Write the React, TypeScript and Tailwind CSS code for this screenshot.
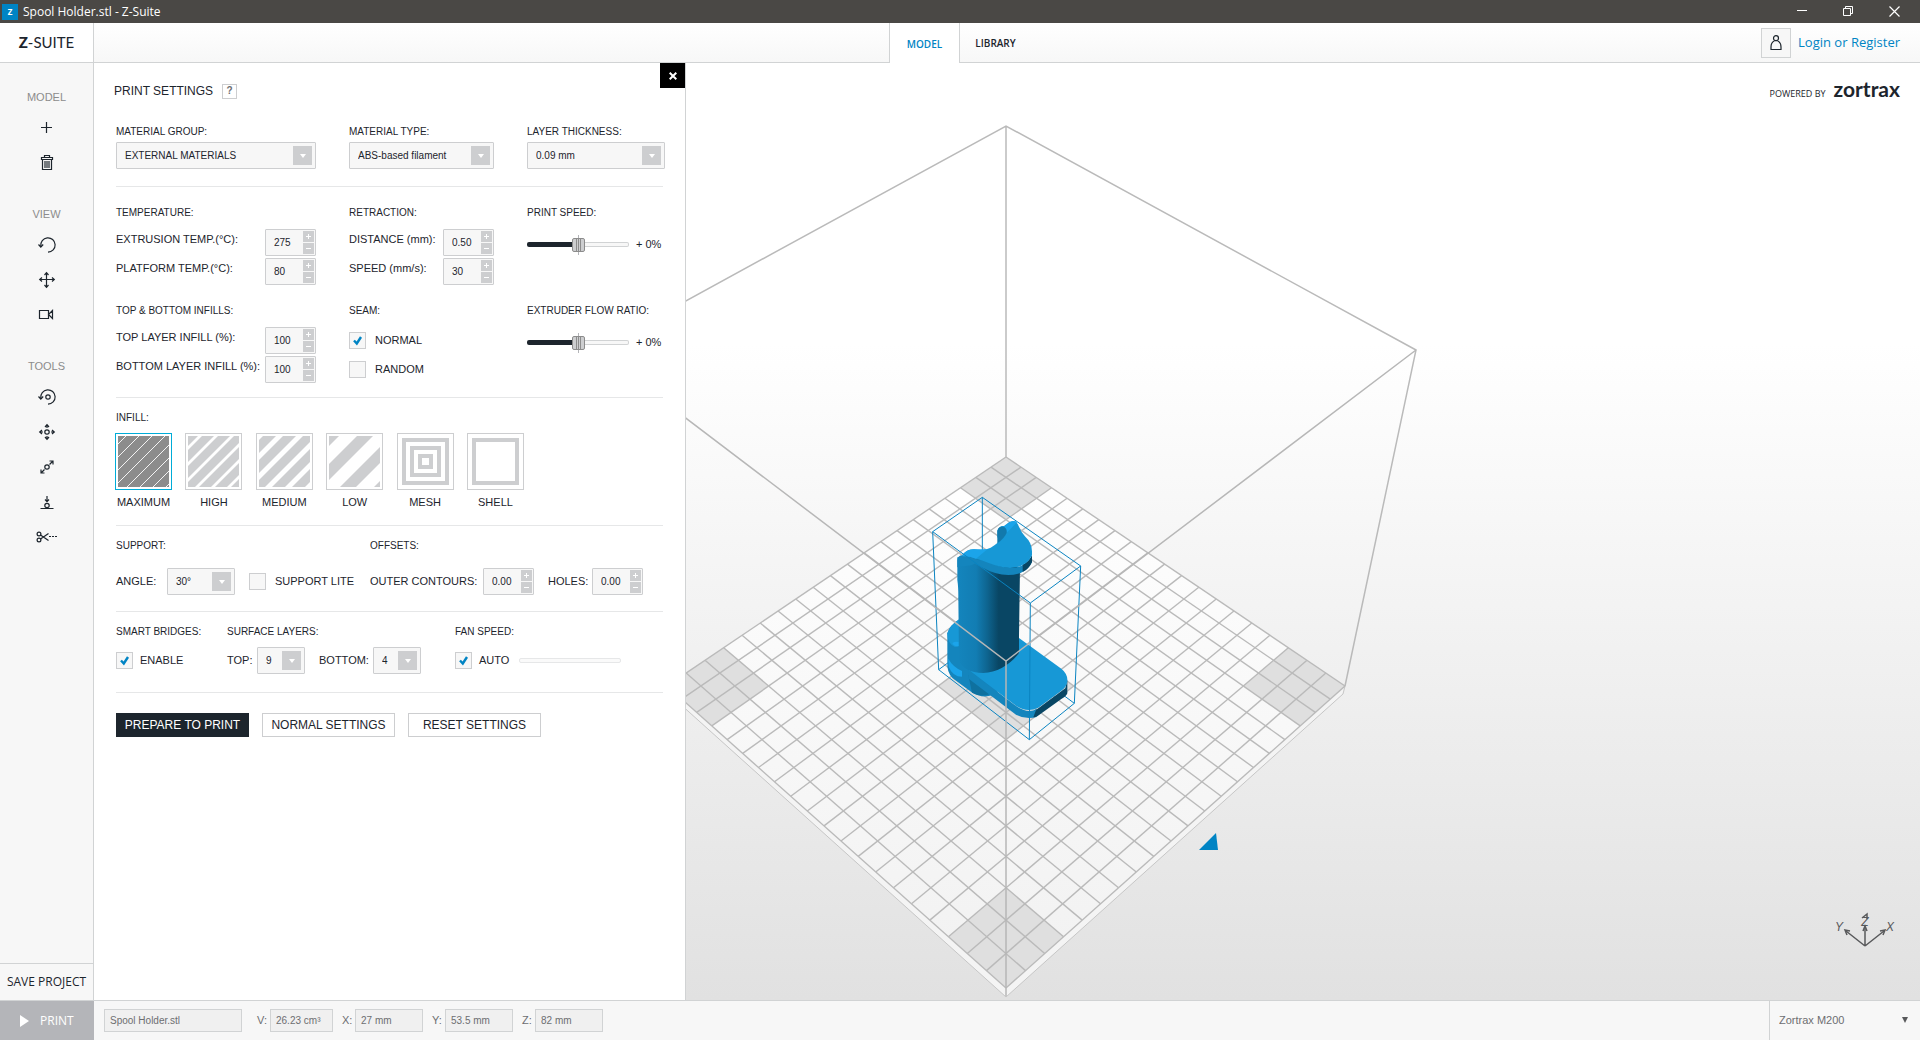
import { useState, type ReactNode } from 'react'

type Point = [number, number]

const CELLS = 20
const TOP: Point = [1006, 457]
const RIGHT: Point = [1345, 686]
const BOTTOM: Point = [1006, 988]
const LEFT: Point = [667, 686]

// Perspective mapping of the unit square onto the build platform
function project(u: number, v: number): Point {
  const [x0, y0] = TOP
  const [x1, y1] = RIGHT
  const [x2, y2] = BOTTOM
  const [x3, y3] = LEFT
  const dx1 = x1 - x2
  const dx2 = x3 - x2
  const dx3 = x0 - x1 + x2 - x3
  const dy1 = y1 - y2
  const dy2 = y3 - y2
  const dy3 = y0 - y1 + y2 - y3
  const det = dx1 * dy2 - dx2 * dy1
  const g = (dx3 * dy2 - dx2 * dy3) / det
  const h = (dx1 * dy3 - dx3 * dy1) / det
  const w = g * u + h * v + 1
  return [
    ((x1 - x0 + g * x1) * u + (x3 - x0 + h * x3) * v + x0) / w,
    ((y1 - y0 + g * y1) * u + (y3 - y0 + h * y3) * v + y0) / w,
  ]
}

function area(a: number, b: number, c: number, d: number) {
  const corners = [project(a, b), project(c, b), project(c, d), project(a, d)]
  return corners.map((p) => p.join(',')).join(' ')
}

const STEPS = Array.from({ length: CELLS + 1 }, (_, i) => i / CELLS)
const MARKED = [
  area(0, 0, 0.15, 0.15),
  area(0.85, 0, 1, 0.15),
  area(0, 0.85, 0.15, 1),
  area(0.85, 0.85, 1, 1),
  area(0.4, 0.4, 0.6, 0.6),
]

function Platform() {
  return (
    <g>
      <path d="M667 686L1006 988L1345 686L1343 694L1006 997L669 694Z" fill="#f4f4f4" />
      <path d="M669 694L1006 997L1343 694L1345 686" fill="none" stroke="#c6c6c6" />
      <polygon points={area(0, 0, 1, 1)} fill="url(#plate)" />
      {MARKED.map((points) => (
        <polygon key={points} points={points} fill="#dfdfdf" />
      ))}
      <g stroke="#bababa" strokeWidth="1.4">
        {STEPS.map((t) => {
          const [ax, ay] = project(t, 0)
          const [bx, by] = project(t, 1)
          const [cx, cy] = project(0, t)
          const [dx, dy] = project(1, t)
          return (
            <g key={t}>
              <line x1={ax} y1={ay} x2={bx} y2={by} />
              <line x1={cx} y1={cy} x2={dx} y2={dy} />
            </g>
          )
        })}
      </g>
    </g>
  )
}

function SpoolHolder() {
  return (
    <g transform="translate(900 480) scale(0.33333)">
      <g fill="none" stroke="#0a84c1" strokeWidth="3">
        <path d="M98 155L247 52L542 258L523 670L388 779L116 569ZM247 52V240M116 569L150 544M523 670L480 638" />
      </g>

      {/* rear foot */}
      <path d="M180 416Q148 436 142 460V560Q146 588 166 601L214 636Q244 656 276 646L330 610L250 480Z" fill="#1485bd" />
      <path d="M180 416Q148 436 142 460Q142 492 165 501L180 498Z" fill="#1798d6" />
      <path d="M157 489Q164 484 176 486V498Q164 502 157 489Z" fill="#1ba4ea" />
      <path d="M145 536Q158 560 186 573V590Q158 590 146 560Z" fill="#1ba4ea" />
      <path d="M205 585L275 640Q245 654 216 638Z" fill="#0f719f" />

      {/* front foot */}
      <path d="M204 568L345 676Q385 704 410 686V711Q378 720 348 704L206 596Z" fill="#1485bd" />
      <path d="M408 690L496 625L502 600V640Q500 648 484 657L412 709Q406 712 400 712Z" fill="#094664" />
      <path d="M357 474L484 566Q504 582 502 604Q500 622 482 634L415 683Q382 699 350 679L204 568Q280 590 357 520Z" fill="#1798d6" />

      {/* barrel */}
      <path d="M172 232V300Q175 320 175 350L177 540Q190 578 250 579Q310 577 357 520V470L360 262L250 225Z" fill="url(#barrel)" />

      {/* head */}
      <path d="M250 238Q300 264 330 264Q380 262 396 228V246Q380 284 325 285Q285 284 250 264L215 246Z" fill="#1485bd" />
      <path d="M368 254Q386 246 396 226V246Q388 266 368 276Z" fill="#094664" />
      <path d="M187 224Q203 206 224 208Q250 214 272 203Q296 190 300 178L292 172V152Q296 138 312 138L328 126Q350 118 357 140Q364 158 376 170Q396 188 396 214V226Q380 262 330 264Q300 262 264 248Q230 234 187 229Z" fill="#1798d6" />
      <path d="M172 240Q174 226 187 226Q216 230 240 242L215 256L172 262Z" fill="#1485bd" />
      <path d="M187 226Q203 206 224 208L262 208L228 236Q208 228 187 229Z" fill="#1ba4ea" />
      <path d="M296 146Q302 136 314 139L330 126Q342 120 352 126L320 158Z" fill="#1ba4ea" />
      <path d="M292 152Q296 138 312 140Q322 146 320 158Q314 174 292 190Z" fill="#1279ac" />

      <g fill="none" stroke="#0a84c1" strokeWidth="3">
        <path d="M98 155L391 369L542 258M391 369L388 779" />
      </g>
    </g>
  )
}

function Scene() {
  return (
    <svg
      viewBox="686 63 1234 937"
      preserveAspectRatio="xMinYMid slice"
      className="absolute inset-0 h-full w-full"
      role="img"
      aria-label="Build volume"
    >
      <defs>
        <linearGradient id="plate" gradientUnits="userSpaceOnUse" x1="0" y1="457" x2="0" y2="988">
          <stop offset="0" stopColor="#ffffff" />
          <stop offset="1" stopColor="#f1f1f1" />
        </linearGradient>
        <linearGradient id="barrel" x1="0" y1="0" x2="1" y2="0">
          <stop offset="0" stopColor="#1485bd" />
          <stop offset="0.3" stopColor="#127db3" />
          <stop offset="0.48" stopColor="#0e648f" />
          <stop offset="0.66" stopColor="#094664" />
          <stop offset="1" stopColor="#094664" />
        </linearGradient>
      </defs>

      <g fill="none" stroke="#bababa" strokeWidth="1.5">
        <path d="M596 350L1006 126L1416 350L1345 686M1006 126V457" />
        <path d="M596 350L667 686" />
      </g>
      <Platform />
      <SpoolHolder />
      <path d="M596 350L1006 661L1416 350M1006 661V996" fill="none" stroke="#b7b7b7" strokeWidth="1.5" />

      <path d="M1199 850L1216 833L1218 850Z" fill="#0084c4" />

      {/* axes */}
      <g fill="none" stroke="#58595b" strokeWidth="1.5">
        <path d="M1865 946L1846 931M1865 946L1884 931M1865 946V927" />
        <path d="M1850 931L1845 930L1847 935M1880 931L1885 930L1883 935M1863 931L1865 926L1867 931" />
        <path d="M1862 918L1867 914L1867 919" />
      </g>
      <g fill="#58595b" fontFamily="Liberation Sans" fontSize="12" fontStyle="italic" textAnchor="middle">
        <text x="1839" y="931">Y</text>
        <text x="1865" y="926">Z</text>
        <text x="1890" y="931">X</text>
      </g>
    </svg>
  )
}

function Icon({ children }: { children: ReactNode }) {
  return (
    <svg width="24" height="24" viewBox="0 0 24 24" fill="none" stroke="#1d252d" strokeWidth="1.2" aria-hidden="true">
      {children}
    </svg>
  )
}

const ICONS: Record<string, ReactNode> = {
  Add: <path d="M11.500 6v11M6 11.500h11" />,
  Delete: (
    <path d="M7.500 8.500v10h9v-10M6.500 8.500v-2h11v2zM9.500 6.500v-2h5v2M10 10v7M12 10v7M14 10v7" />
  ),
  'Reset view': (
    <>
      <path d="M5.800 13A7.200 7.200 0 1 1 13 19.200" />
      <path d="M3.500 11.500L5.800 14L8.200 11.500" />
    </>
  ),
  'Move view': (
    <path d="M11.500 5v14M5 11.500h14M9.500 7l2-2.300L13.500 7M9.500 17l2 2.300L13.500 17M7 9.500l-2.300 2L7 13.500M17 9.500l2.300 2L17 13.500" />
  ),
  Camera: <path d="M4.500 7.500h9v8h-9zM13.500 11.500l4-4v8z" />,
  Rotate: (
    <>
      <path d="M5.800 13A7.200 7.200 0 1 1 13 19.200" />
      <path d="M3.500 11.500L5.800 14L8.200 11.500" />
      <circle cx="13" cy="12" r="2.200" />
    </>
  ),
  Move: (
    <>
      <circle cx="12" cy="12" r="2.200" />
      <path d="M12 8V5M12 16v3M8 12H5M16 12h3M10 7l2-2.300L14 7M10 17l2 2.300L14 17M7 10l-2.300 2L7 14M17 10l2.300 2L17 14" />
    </>
  ),
  Scale: (
    <>
      <circle cx="12" cy="12" r="2.200" />
      <path d="M14.500 9.500L18 6M9.500 14.500L6 18M14.500 6H18v3.500M6 14.500V18h3.500" />
    </>
  ),
  Place: (
    <>
      <circle cx="12" cy="15.500" r="2.200" />
      <path d="M5.500 18.500h13M12 6v5.500M10 9.500l2 2.200L14 9.500" />
    </>
  ),
  Split: (
    <>
      <circle cx="4" cy="9" r="1.900" />
      <circle cx="4" cy="15" r="1.900" />
      <path d="M5.500 14L13.500 8.500M5.500 10L13.500 15.500" />
      <path d="M14 11.500h8.500" strokeDasharray="2 1" />
    </>
  ),
}

const TOOL_GROUPS = [
  { title: 'MODEL', tools: ['Add', 'Delete'] },
  { title: 'VIEW', tools: ['Reset view', 'Move view', 'Camera'] },
  { title: 'TOOLS', tools: ['Rotate', 'Move', 'Scale', 'Place', 'Split'] },
]

function Sidebar() {
  return (
    <aside className="flex w-[94px] shrink-0 flex-col border-r border-[#d1d3d4] bg-[#f7f7f7]">
      <div className="flex flex-1 flex-col gap-[31px] pt-[26px]">
        {TOOL_GROUPS.map((group) => (
          <div key={group.title} className="flex flex-col items-center">
            <h2 className="mb-[11px] text-[11px] leading-4 text-[#8c8c8c]">{group.title}</h2>
            <div className="flex flex-col gap-[11px]">
              {group.tools.map((tool) => (
                <button key={tool} type="button" aria-label={tool}>
                  <Icon>{ICONS[tool]}</Icon>
                </button>
              ))}
            </div>
          </div>
        ))}
      </div>
      <button
        type="button"
        className="h-[37px] border-t border-[#d1d3d4] font-['Open_Sans'] text-[12px] font-medium whitespace-nowrap text-[#1d252d]"
      >
        SAVE PROJECT
      </button>
    </aside>
  )
}

function Heading({ children }: { children: ReactNode }) {
  return <h3 className="text-[10px] leading-4 text-[#1d252d]">{children}</h3>
}

function Select({ label, value, width }: { label: string; value: string; width: string }) {
  return (
    <span className={`relative block h-[27px] ${width}`}>
      <select
        aria-label={label}
        defaultValue={value}
        className="h-full w-full appearance-none rounded-[1px] border border-[#cdced0] bg-[#f7f7f7] px-2 text-[10px] text-[#1d252d]"
      >
        <option>{value}</option>
      </select>
      <span className="pointer-events-none absolute top-1 right-1 flex h-[19px] w-[19px] items-center justify-center bg-[#cdced0]">
        <svg width="6" height="4" viewBox="0 0 6 4" fill="#fff" aria-hidden="true">
          <path d="M0 0h6L3 4z" />
        </svg>
      </span>
    </span>
  )
}

function Spinner({ label, initial, step = 1 }: { label: string; initial: string; step?: number }) {
  const [value, setValue] = useState(initial)
  const digits = initial.includes('.') ? 2 : 0

  function change(delta: number) {
    setValue((prev) => (Number(prev) + delta).toFixed(digits))
  }

  return (
    <span className="flex h-[27px] w-[51px] shrink-0 rounded-[1px] border border-[#cdced0] bg-[#f7f7f7] p-px">
      <input
        aria-label={label}
        value={value}
        onChange={(e) => setValue(e.target.value)}
        className="w-full min-w-0 bg-transparent pl-[7px] text-[10px] text-[#1d252d] outline-none"
      />
      <span className="flex w-[11px] shrink-0 flex-col gap-px">
        <button type="button" aria-label="Increase" onClick={() => change(step)} className="flex flex-1 items-center justify-center bg-[#cdced0]">
          <svg width="5" height="5" viewBox="0 0 5 5" stroke="#fff" aria-hidden="true">
            <path d="M2.500 0v5M0 2.500h5" />
          </svg>
        </button>
        <button type="button" aria-label="Decrease" onClick={() => change(-step)} className="flex flex-1 items-center justify-center bg-[#cdced0]">
          <svg width="5" height="5" viewBox="0 0 5 5" stroke="#fff" aria-hidden="true">
            <path d="M0 2.500h5" />
          </svg>
        </button>
      </span>
    </span>
  )
}

function Field({ label, initial, step }: { label: string; initial: string; step?: number }) {
  return (
    <div className="flex items-start justify-between">
      <span className="text-[11px] leading-5 whitespace-nowrap">{label}</span>
      <Spinner label={label} initial={initial} step={step} />
    </div>
  )
}

function Checkbox({ label, checked = false, gap = 'gap-[9px]' }: { label: string; checked?: boolean; gap?: string }) {
  return (
    <label className={`flex h-[27px] items-center text-[11px] whitespace-nowrap ${gap}`}>
      <span className="relative h-[17px] w-[17px]">
        <input
          type="checkbox"
          defaultChecked={checked}
          className="peer block h-[17px] w-[17px] appearance-none border border-[#cdced0] bg-[#f7f7f7]"
        />
        <svg
          viewBox="0 0 17 17"
          className="pointer-events-none absolute inset-0 hidden peer-checked:block"
          fill="none"
          stroke="#0084c4"
          strokeWidth="2.400"
          aria-hidden="true"
        >
          <path d="M5 8.500L7.800 11.500L12 5" />
        </svg>
      </span>
      {label}
    </label>
  )
}

function Slider({ label }: { label: string }) {
  const [value, setValue] = useState(0)
  return (
    <div className="flex h-[31px] items-center gap-[7px]">
      <span className="relative flex h-5 w-[102px] items-center">
        <span className="absolute inset-y-0 left-1/2 w-px bg-[#b4b5b9]" />
        <input
          type="range"
          min={-50}
          max={50}
          value={value}
          aria-label={label}
          onChange={(e) => setValue(Number(e.target.value))}
          className="relative h-[5px] w-full appearance-none rounded-[2px] border border-transparent [background:linear-gradient(#1d252d,#1d252d)_0_0/50%_100%_no-repeat_border-box,linear-gradient(#f7f7f7,#f7f7f7)_padding-box,#d1d3d4_border-box] [&::-webkit-slider-thumb]:h-[14px] [&::-webkit-slider-thumb]:w-[13px] [&::-webkit-slider-thumb]:appearance-none [&::-webkit-slider-thumb]:rounded-[2px] [&::-webkit-slider-thumb]:border [&::-webkit-slider-thumb]:border-[#8c8c8c] [&::-webkit-slider-thumb]:bg-[linear-gradient(to_right,#cdced0_3px,#8c8c8c_3px,#8c8c8c_4px,#cdced0_4px,#cdced0_5px,#8c8c8c_5px,#8c8c8c_6px,#cdced0_6px,#cdced0_7px,#8c8c8c_7px,#8c8c8c_8px,#cdced0_8px)]"
        />
      </span>
      <span className="text-[11px] whitespace-nowrap">+ {value}%</span>
    </div>
  )
}

function Stripes({ start, pitch, width }: { start: number; pitch: number; width: number }) {
  const bands = Array.from({ length: 12 }, (_, i) => start + pitch * i).filter((c) => c < 102)
  return (
    <>
      {bands.map((c) => (
        <polygon key={c} points={`${c},0 ${c + width},0 ${c + width - 51},51 ${c - 51},51`} fill="#cdced0" />
      ))}
    </>
  )
}

const INFILLS: { name: string; art: ReactNode }[] = [
  {
    name: 'MAXIMUM',
    art: (
      <>
        <rect width="51" height="51" fill="#8c8c8c" />
        <path d="M8 0L-43 51M21 0L-30 51M34 0L-17 51M47 0L-4 51M60 0L9 51M73 0L22 51M86 0L35 51M99 0L48 51" stroke="#fff" strokeWidth="0.900" />
      </>
    ),
  },
  { name: 'HIGH', art: <Stripes start={-2} pitch={16} width={12} /> },
  { name: 'MEDIUM', art: <Stripes start={4} pitch={20} width={13} /> },
  { name: 'LOW', art: <Stripes start={-6} pitch={34} width={16} /> },
  {
    name: 'MESH',
    art: (
      <g fill="none" stroke="#cdced0" strokeWidth="4">
        <rect x="4" y="4" width="43" height="43" />
        <rect x="12" y="12" width="27" height="27" />
        <rect x="20" y="20" width="11" height="11" />
      </g>
    ),
  },
  { name: 'SHELL', art: <rect x="4" y="4" width="43" height="43" fill="none" stroke="#cdced0" strokeWidth="4" /> },
]

function Infill() {
  const [selected, setSelected] = useState('MAXIMUM')
  return (
    <div className="-ml-px mt-[7px] flex w-[409px] justify-between">
      {INFILLS.map(({ name, art }) => (
        <label key={name} className="flex w-[57px] flex-col items-center gap-1 text-[11px] leading-4">
          <input
            type="radio"
            name="infill"
            checked={selected === name}
            onChange={() => setSelected(name)}
            className="peer sr-only"
          />
          <span className="block h-[57px] w-[57px] border border-[#cdced0] bg-white p-[2px] peer-checked:border-[#00acd8]">
            <svg width="51" height="51" viewBox="0 0 51 51" aria-hidden="true">
              {art}
            </svg>
          </span>
          {name}
        </label>
      ))}
    </div>
  )
}

function PrintSettings() {
  return (
    <section className="relative w-[592px] shrink-0 border-r border-[#d1d3d4] bg-white pr-[22px] pl-[22px] text-[#1d252d]">
      <button type="button" aria-label="Close" className="absolute top-0 right-0 flex h-[25px] w-[25px] items-center justify-center bg-black">
        <svg width="8" height="8" viewBox="0 0 8 8" stroke="#fff" strokeWidth="2" aria-hidden="true">
          <path d="M0.700 0.700L7.300 7.300M7.300 0.700L0.700 7.300" />
        </svg>
      </button>

      <header className="-ml-[2px] flex items-center gap-[9px] pt-5">
        <h2 className="text-[12px] leading-4">PRINT SETTINGS</h2>
        <button type="button" aria-label="Help" className="h-[15px] w-[15px] border border-[#cdced0] text-[10px] leading-3 font-bold text-[#6d6e71]">
          ?
        </button>
      </header>

      <div className="grid grid-cols-[233px_178px_1fr] border-b border-[#e6e7e8] pt-[25px] pb-[17px]">
        <div className="flex flex-col gap-[2px]">
          <Heading>MATERIAL GROUP:</Heading>
          <Select label="Material group" value="EXTERNAL MATERIALS" width="w-[200px]" />
        </div>
        <div className="flex flex-col gap-[2px]">
          <Heading>MATERIAL TYPE:</Heading>
          <Select label="Material type" value="ABS-based filament" width="w-[145px]" />
        </div>
        <div className="flex flex-col gap-[2px]">
          <Heading>LAYER THICKNESS:</Heading>
          <Select label="Layer thickness" value="0.09 mm" width="w-[138px]" />
        </div>
      </div>

      <div className="grid grid-cols-[233px_178px_1fr] gap-y-[18px] border-b border-[#e6e7e8] pt-[18px] pb-[14px]">
        <div>
          <Heading>TEMPERATURE:</Heading>
          <div className="mt-2 flex w-[200px] flex-col gap-[2px]">
            <Field label="EXTRUSION TEMP.(°C):" initial="275" />
            <Field label="PLATFORM TEMP.(°C):" initial="80" />
          </div>
        </div>
        <div>
          <Heading>RETRACTION:</Heading>
          <div className="mt-2 flex w-[145px] flex-col gap-[2px]">
            <Field label="DISTANCE (mm):" initial="0.50" step={0.05} />
            <Field label="SPEED (mm/s):" initial="30" />
          </div>
        </div>
        <div>
          <Heading>PRINT SPEED:</Heading>
          <div className="mt-2">
            <Slider label="Print speed" />
          </div>
        </div>
        <div>
          <Heading>TOP &amp; BOTTOM INFILLS:</Heading>
          <div className="mt-2 flex w-[200px] flex-col gap-[2px]">
            <Field label="TOP LAYER INFILL (%):" initial="100" />
            <Field label="BOTTOM LAYER INFILL (%):" initial="100" />
          </div>
        </div>
        <div>
          <Heading>SEAM:</Heading>
          <div className="mt-2 flex flex-col gap-[2px]">
            <Checkbox label="NORMAL" checked />
            <Checkbox label="RANDOM" />
          </div>
        </div>
        <div>
          <Heading>EXTRUDER FLOW RATIO:</Heading>
          <div className="mt-2">
            <Slider label="Extruder flow ratio" />
          </div>
        </div>
      </div>

      <div className="border-b border-[#e6e7e8] pt-3 pb-[15px]">
        <Heading>INFILL:</Heading>
        <Infill />
      </div>

      <div className="grid grid-cols-[254px_1fr] gap-y-[14px] border-b border-[#e6e7e8] pt-3 pb-4 text-[11px]">
        <Heading>SUPPORT:</Heading>
        <Heading>OFFSETS:</Heading>
        <div className="flex items-center">
          <span className="w-[51px]">ANGLE:</span>
          <Select label="Angle" value="30°" width="w-[68px] mr-[14px]" />
          <Checkbox label="SUPPORT LITE" />
        </div>
        <div className="flex items-center">
          <span className="w-[113px] whitespace-nowrap">OUTER CONTOURS:</span>
          <Spinner label="Outer contours" initial="0.00" step={0.01} />
          <span className="ml-[14px] w-11">HOLES:</span>
          <Spinner label="Holes" initial="0.00" step={0.01} />
        </div>
      </div>

      <div className="grid grid-cols-[111px_228px_1fr] gap-y-[7px] border-b border-[#e6e7e8] pt-3 pb-[18px] text-[11px]">
        <Heading>SMART BRIDGES:</Heading>
        <Heading>SURFACE LAYERS:</Heading>
        <Heading>FAN SPEED:</Heading>
        <Checkbox label="ENABLE" checked gap="gap-[7px]" />
        <div className="flex items-center">
          <span className="w-[30px]">TOP:</span>
          <Select label="Top layers" value="9" width="w-[48px]" />
          <span className="ml-[14px] w-[54px]">BOTTOM:</span>
          <Select label="Bottom layers" value="4" width="w-[48px]" />
        </div>
        <div className="flex items-center gap-[10px]">
          <Checkbox label="AUTO" checked gap="gap-[7px]" />
          <input
            type="range"
            disabled
            aria-label="Fan speed"
            className="h-[5px] w-[102px] appearance-none rounded-[2px] border border-[#e6e7e8] bg-[#fafafa] [&::-webkit-slider-thumb]:invisible [&::-webkit-slider-thumb]:appearance-none"
          />
        </div>
      </div>

      <div className="flex gap-[13px] pt-5 text-[12px]">
        <button type="button" className="h-6 w-[133px] bg-[#1d252d] text-white">
          PREPARE TO PRINT
        </button>
        <button type="button" className="h-6 w-[133px] border border-[#cdced0]">
          NORMAL SETTINGS
        </button>
        <button type="button" className="h-6 w-[133px] border border-[#cdced0]">
          RESET SETTINGS
        </button>
      </div>
    </section>
  )
}

function TitleBar() {
  return (
    <div className="flex h-[23px] shrink-0 items-center bg-[#4a4845] pr-5 pl-[2px] font-['Open_Sans'] text-[12px] text-white">
      <span className="mr-[5px] flex h-4 w-4 items-center justify-center bg-[#0084c4] text-[8px] font-bold">Z</span>
      <h1 className="flex-1">Spool Holder.stl - Z-Suite</h1>
      <div className="flex gap-[35px]">
        <button type="button" aria-label="Minimize">
          <svg width="11" height="11" viewBox="0 0 11 11" stroke="#fff" aria-hidden="true">
            <path d="M0 4.500h10" />
          </svg>
        </button>
        <button type="button" aria-label="Restore">
          <svg width="11" height="11" viewBox="0 0 11 11" fill="none" stroke="#fff" aria-hidden="true">
            <path d="M0.500 2.500h7v7h-7zM2.500 2.500v-2h7v7h-2" />
          </svg>
        </button>
        <button type="button" aria-label="Close window">
          <svg width="11" height="11" viewBox="0 0 11 11" stroke="#fff" strokeWidth="1.200" aria-hidden="true">
            <path d="M0.500 0.500l10 10M10.500 0.500l-10 10" />
          </svg>
        </button>
      </div>
    </div>
  )
}

function Header() {
  return (
    <header className="grid h-10 shrink-0 grid-cols-[1fr_auto_1fr] bg-linear-to-b from-white to-[#f7f7f7] font-['Open_Sans']">
      <div className="flex border-b border-[#d1d3d4]">
        <div className="flex w-[94px] items-center justify-center border-r border-[#d1d3d4] bg-white font-['Lato'] text-[15px] text-[#1d252d]">
          <b className="font-black">Z</b>
          <span>-SUITE</span>
        </div>
      </div>
      <nav className="flex text-[10px] font-semibold">
        <a href="#model" className="flex w-[71px] items-center justify-center border-x border-[#d1d3d4] bg-white pt-[2px] text-[#0084c4]">
          MODEL
        </a>
        <a href="#library" className="flex w-[71px] items-center justify-center border-b border-[#d1d3d4] pt-[2px] text-[#1d252d]">
          LIBRARY
        </a>
      </nav>
      <div className="flex items-center justify-end gap-[7px] border-b border-[#d1d3d4] pt-px pr-5">
        <span className="flex h-[30px] w-[30px] items-center justify-center border border-[#d1d3d4] bg-[#f7f7f7]">
          <svg width="12" height="16" viewBox="0 0 12 16" fill="none" stroke="#1d252d" strokeWidth="1.200" aria-hidden="true">
            <circle cx="6" cy="3.200" r="2.500" />
            <path d="M4.300 6Q1 7.500 1 12v2.500h10V12Q11 7.500 7.700 6" />
          </svg>
        </span>
        <a href="#login" className="text-[13px] text-[#0084c4]">
          Login or Register
        </a>
      </div>
    </header>
  )
}

const DIMENSIONS = [
  { axis: 'V:', value: '26.23 cm³', width: 'w-[63px]' },
  { axis: 'X:', value: '27 mm', width: 'w-[68px]' },
  { axis: 'Y:', value: '53.5 mm', width: 'w-[68px]' },
  { axis: 'Z:', value: '82 mm', width: 'w-[68px]' },
]

function StatusBar() {
  return (
    <footer className="flex h-10 shrink-0 items-stretch border-t border-[#d1d3d4] bg-[#f7f7f7] text-[10px] text-[#6d6e71]">
      <button type="button" className="flex w-[94px] items-center gap-[11px] bg-[#b4b5b9] pl-5 font-['Open_Sans'] text-[12px] font-medium text-white">
        <svg width="9" height="12" viewBox="0 0 9 12" fill="#fff" aria-hidden="true">
          <path d="M0 0L9 6L0 12z" />
        </svg>
        PRINT
      </button>
      <div className="flex flex-1 items-center gap-[9px] pl-[10px]">
        <input
          aria-label="File name"
          readOnly
          value="Spool Holder.stl"
          className="mr-[6px] h-[23px] w-[138px] border border-[#d1d3d4] bg-[#f0f0f0] px-[5px]"
        />
        {DIMENSIONS.map(({ axis, value, width }) => (
          <label key={axis} className="flex items-center">
            <span className="w-[13px] text-[11px]">{axis}</span>
            <input readOnly value={value} className={`h-[23px] border border-[#d1d3d4] bg-[#f0f0f0] px-[5px] ${width}`} />
          </label>
        ))}
      </div>
      <div className="relative w-[151px] border-l border-[#d1d3d4]">
        <select aria-label="Printer" className="h-full w-full appearance-none bg-transparent pl-[9px] text-[11px]">
          <option>Zortrax M200</option>
        </select>
        <svg width="6" height="6" viewBox="0 0 6 6" className="pointer-events-none absolute top-4 right-3" fill="#58595b" aria-hidden="true">
          <path d="M0 0h6L3 6z" />
        </svg>
      </div>
    </footer>
  )
}

export default function App() {
  return (
    <div className="flex h-screen flex-col overflow-hidden bg-white font-['Liberation_Sans',sans-serif]">
      <TitleBar />
      <Header />
      <div className="flex min-h-0 flex-1">
        <Sidebar />
        <PrintSettings />
        <main className="relative min-w-0 flex-1 overflow-hidden bg-linear-to-b from-white from-30% to-[#e1e1e1]">
          <Scene />
          <div className="relative flex items-baseline justify-end gap-2 pt-[10px] pr-5 text-[#1d252d]">
            <span className="font-['Open_Sans'] text-[9px] font-medium">POWERED BY</span>
            <span className="font-['Lato'] text-[21px] font-bold">zortrax</span>
          </div>
        </main>
      </div>
      <StatusBar />
    </div>
  )
}
